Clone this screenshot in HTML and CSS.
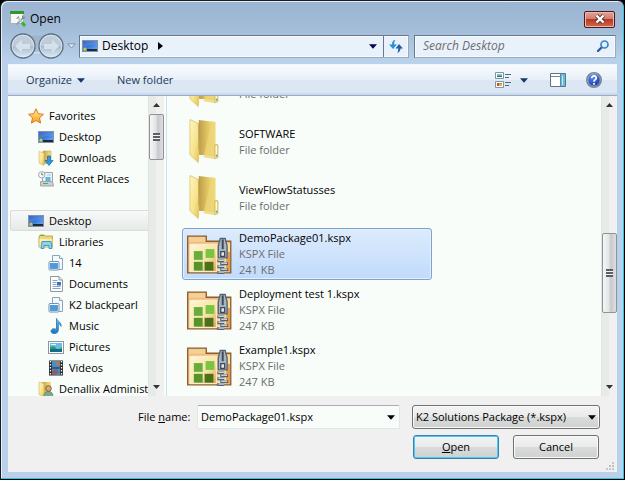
FILE: index.html
```html
<!DOCTYPE html>
<html lang="en">
<head>
<meta charset="utf-8">
<title>Open</title>
<link rel="stylesheet" href="styles.css">
</head>
<body>
<svg class="defs" aria-hidden="true">
  <defs>
    <linearGradient id="gScreen" x1="0" y1="0" x2="1" y2="1"><stop offset="0" stop-color="#1c4fb0"/><stop offset=".55" stop-color="#3f7fe0"/><stop offset="1" stop-color="#7db4f5"/></linearGradient>
    <linearGradient id="gFront" x1="0" y1="0" x2="1" y2="1"><stop offset="0" stop-color="#fdf6c4"/><stop offset=".6" stop-color="#f6e38a"/><stop offset="1" stop-color="#e2c04e"/></linearGradient>
    <linearGradient id="gBack" x1="0" y1="0" x2="1" y2="0"><stop offset="0" stop-color="#bd9c48"/><stop offset=".5" stop-color="#e0c363"/><stop offset="1" stop-color="#f5e283"/></linearGradient>
    <linearGradient id="gPack" x1="0" y1="0" x2="1" y2="1"><stop offset="0" stop-color="#fdf6d6"/><stop offset=".6" stop-color="#f8e3a4"/><stop offset="1" stop-color="#e09c50"/></linearGradient>
    <linearGradient id="gBall" x1="0" y1="0" x2="0" y2="1"><stop offset="0" stop-color="#c3cfda"/><stop offset=".48" stop-color="#bccbd9"/><stop offset=".52" stop-color="#a9bccd"/><stop offset="1" stop-color="#dcebf7"/></linearGradient>
    <linearGradient id="gStar" x1="0" y1="0" x2="0" y2="1"><stop offset="0" stop-color="#fff3a0"/><stop offset="1" stop-color="#f79a1c"/></linearGradient>
    <radialGradient id="gHelp" cx=".4" cy=".3" r=".8"><stop offset="0" stop-color="#5d8df0"/><stop offset="1" stop-color="#0b2390"/></radialGradient>
    <linearGradient id="gBlue" x1="0" y1="0" x2="0" y2="1"><stop offset="0" stop-color="#6cc4ee"/><stop offset="1" stop-color="#1676c4"/></linearGradient>
  </defs>
  <symbol id="desktop" viewBox="0 0 16 16">
    <rect x=".5" y="2.500" width="15" height="11" fill="url(#gScreen)" stroke="#7f93ad"/>
    <path d="M1 3h14v4Q7 6 1 10z" fill="#fff" opacity=".12"/>
    <path d="M5 11h10v2H5z" fill="#20293a"/><path d="M1 11h4v2H1z" fill="#3a9bdc"/>
    <circle cx="3" cy="11" r="1.500" fill="#f4c22b"/><path d="M3 11l2-1v2z" fill="#56b947"/>
  </symbol>
  <symbol id="star" viewBox="0 0 16 16"><path d="M8 .8l2.200 4.900 5.200.6-3.900 3.600 1.100 5.200L8 12.500l-4.600 2.600 1.100-5.200L.6 6.300l5.200-.6z" fill="url(#gStar)" stroke="#d97a1a"/></symbol>
  <symbol id="downloads" viewBox="0 0 16 16">
    <path d="M5 1h8v12l-8 1z" fill="url(#gBack)" stroke="#c9a84c" stroke-width=".6"/>
    <path d="M1 1.500l5 1.500v12.500L1 13z" fill="url(#gFront)" stroke="#d2b558" stroke-width=".6"/>
    <path d="M9.500 6h3v4.500H15L11 15.500 7 10.500h2.500z" fill="#2b9be0" stroke="#1768ab" stroke-width=".7"/>
  </symbol>
  <symbol id="recent" viewBox="0 0 16 16">
    <path d="M6 1.500h8.500v9H4.500V6z" fill="#eef4f8" stroke="#9aa3ab"/>
    <path d="M7.500 6h5v4h-5z" fill="#5fb5dc"/><path d="M9 3h4v2H9z" fill="#bfe0f2"/>
    <path d="M2.500 10.500h12l1 4.500h-13z" fill="#c9ced3" stroke="#a0a6ab"/><path d="M5 12.500h5" stroke="#4cb052"/>
    <circle cx="3.800" cy="3.800" r="3.200" fill="#f5f7f9" stroke="#a2a9af"/><path d="M3.800 1.800v2h1.600" fill="none" stroke="#777"/>
  </symbol>
  <symbol id="libraries" viewBox="0 0 16 16">
    <path d="M1 3l1-2h4l1 1h7.500v11H1z" fill="#eed77c" stroke="#c4a44b"/><path d="M2 1.500h4" stroke="#54b847"/>
    <path d="M1.500 5h13v8h-13z" fill="url(#gFront)"/>
    <path d="M3 14.500l1-7h9l1 7h-3v-3H6v3z" fill="#8fd2ee" stroke="#3f9dcb"/>
  </symbol>
  <symbol id="library" viewBox="0 0 16 16">
    <path d="M4.500.5h7l3 3v11h-10z" fill="#f3f8fc" stroke="#8aa6bd"/><path d="M11.500.5v3h3" fill="#fff" stroke="#8aa6bd"/>
    <rect x="1" y="6.500" width="10" height="8.500" rx="1" fill="#fff" stroke="#6f93b3"/><rect x="2.500" y="8.500" width="7" height="5" fill="#4a9be0" stroke="#2a78bf" stroke-width=".6"/>
  </symbol>
  <symbol id="document" viewBox="0 0 16 16">
    <path d="M2.500.5h8.500l3.500 3.500v11.500h-12z" fill="#fdfdfd" stroke="#9099a1"/><path d="M11 .5V4h3.500" fill="#e3e8ec" stroke="#9099a1"/>
    <path d="M4.500 4.500h5M4.500 6.500h4M4.500 8.500h4M4.500 10.500h8M4.500 12.500h8" stroke="#8da0c0"/><path d="M9 6h4v3.500H9z" fill="#2b74c9"/>
  </symbol>
  <symbol id="music" viewBox="0 0 16 16"><path d="M8.500 11.500V.5c.8 2.800 5.200 3.500 4.500 8-.6-2-1.500-2.700-2.700-3v6.500c0 4.700-7.300 4.200-7.300 1.200 0-2.300 3-3.300 5.500-1.700z" fill="url(#gBlue)" stroke="#2873ad" stroke-width=".8"/></symbol>
  <symbol id="picture" viewBox="0 0 16 16"><rect x=".5" y="2.500" width="15" height="12" fill="#fff" stroke="#8b979f"/><path d="M2 4h12v9H2z" fill="#69bde8"/><path d="M2 8q4-2 6 1t6-1v2H2z" fill="#2e9a68"/><path d="M2 10h12v3H2z" fill="#176d83"/><path d="M3 5.500h5" stroke="#e9f8ff"/></symbol>
  <symbol id="video" viewBox="0 0 16 16"><path d="M1 .5h14v15H1z" fill="#26292d"/><path d="M4 1h8v6.500H4zM4 8.500h8V15H4z" fill="#3c92cd"/><path d="M7 1l5 2v3L8 5z" fill="#c7724b"/><path d="M4 11l5-2 2 4-4 2H4z" fill="#8d5d6a"/><path d="M2.500 1v14M13.500 1v14" stroke="#eee" stroke-dasharray="1.500 1.500" stroke-width="1.400"/></symbol>
  <symbol id="user" viewBox="0 0 16 16"><path d="M4 1h9v13l-8 1z" fill="url(#gBack)"/><path d="M1 1l5 1.500v13L1 13.500z" fill="url(#gFront)" stroke="#d2b558" stroke-width=".6"/><path d="M6 15.500c0-4 2-5 4.500-5s4.500 1 4.500 5z" fill="#79a88c" stroke="#567e69" stroke-width=".6"/><circle cx="10.500" cy="7.500" r="2.800" fill="#d9a878" stroke="#6a4a36" stroke-width=".8"/></symbol>
  <symbol id="folder" viewBox="0 0 46 48">
    <path d="M12 1.500l17 2v35L12 37z" fill="url(#gBack)"/><path d="M25 3l4 .5v22l2 1v12l-3 3-11-2z" fill="#edd676" opacity=".8"/>
    <path d="M3 1l8.500 4 .8 25-.8 15L3 37z" fill="url(#gFront)" stroke="#dcc168" stroke-width=".8"/>
    <path d="M12 5v27" stroke="#a88b43" stroke-width=".8" opacity=".7"/>
    <path d="M28.500 27h3v13l-3 1z" fill="#fffbe4" stroke="#d1b14b"/><path d="M29.500 37H31v2h-1.500z" fill="#4f95c8"/>
  </symbol>
  <symbol id="package" viewBox="0 0 46 48">
    <path d="M.7 43.300V5.700h19V11h25v32.300z" fill="#f1c98a" stroke="#8b5d30" stroke-width="1.400"/>
    <path d="M2 7h16.500v4H2z" fill="#f3d096"/><path d="M2 12h42v30H2z" fill="#edb876"/>
    <path d="M3 14h27v28H3z" fill="url(#gPack)" stroke="#fdf3d7"/>
    <path d="M31 13h13v29H31z" fill="#f6df9b"/><path d="M40 22h4v20h-4z" fill="#e39d52"/>
    <path d="M7 21h9v9H7z" fill="#68ad3c"/><path d="M19 19h9v9h-9z" fill="#79c441"/><path d="M7 32h9v9H7z" fill="#56932b"/><path d="M18 32h9v9h-9z" fill="#4a7119"/>
    <path d="M34 8h5l2 8v12h-9V16z" fill="#aab5c2" stroke="#566374" stroke-width="1.400"/>
    <path d="M36.500 9v10" stroke="#3c4858" stroke-width="2"/><path d="M34.500 21.500h4v5h-4z" fill="#e1e6eb" stroke="#3c4858" stroke-width="1.300"/>
    <path d="M31 31h7M34 34h8M31 37h7M34 40h8M31 43h7" stroke="#566374" stroke-width="3"/><path d="M32 30.500h6M35 33.500h6M32 36.500h6M35 39.500h6M32 42.500h6" stroke="#c8d0d9" stroke-width="1.500"/>
  </symbol>
  <symbol id="down" viewBox="0 0 9 5"><path d="M0 0h9L4.500 5z" fill="currentColor"/></symbol>
</svg>

<main class="window">
  <header class="titlebar">
    <svg class="icon" viewBox="0 0 16 16"><path d="M.5.500h13v12H.5z" fill="#f6f8f8" stroke="#a9b4b4"/><path d="M0 0h14v3H0z" fill="#2f9a2c"/><path d="M6.500 13.500l8-8" stroke="#8b969c" stroke-width="1.600"/><path d="M7.500 6l5 6" stroke="#c3cacd" stroke-width="2"/><path d="M12.500 4.500v2.500H15M6.500 7.500l2.500-2" fill="none" stroke="#7d888e"/><path d="M12 11.500l3 3.500" stroke="#35b52d" stroke-width="3"/></svg>
    <h1 class="title">Open</h1>
    <button class="close" aria-label="Close"><svg viewBox="0 0 12 10"><path d="M2.500 1.500l7 7M9.500 1.500l-7 7" stroke="#5a3838" stroke-width="4.200"/><path d="M2.500 1.500l7 7M9.500 1.500l-7 7" stroke="#fff" stroke-width="2.400"/></svg></button>
  </header>

  <nav class="navbar" aria-label="Location">
    <div class="balls">
      <button class="ball" aria-label="Back"><svg viewBox="0 0 26 26"><circle cx="13" cy="13" r="12" fill="url(#gBall)" stroke="#5d7084" stroke-width="1.300"/><circle cx="13" cy="13" r="10.800" fill="none" stroke="#e2ecf5" opacity=".7"/><path d="M5 13l7-6v4h8v5h-8v4z" fill="#dce6ef" opacity=".85"/></svg></button>
      <button class="ball" aria-label="Forward"><svg viewBox="0 0 26 26"><circle cx="13" cy="13" r="12" fill="url(#gBall)" stroke="#5d7084" stroke-width="1.300"/><circle cx="13" cy="13" r="10.800" fill="none" stroke="#e2ecf5" opacity=".7"/><path d="M21 13l-7-6v4H6v5h8v4z" fill="#dce6ef" opacity=".85"/></svg></button>
    </div>
    <button class="history" aria-label="Recent locations"><svg viewBox="0 0 9 6"><path d="M.8.800h7.400L4.500 5z" fill="#dce8f4" stroke="#7f93a9"/></svg></button>
    <div class="address">
      <svg class="icon"><use href="#desktop"/></svg>
      <button class="crumb">Desktop</button>
      <svg class="chevron" viewBox="0 0 5 8"><path d="M0 0l5 4-5 4z"/></svg>
      <button class="drop" aria-label="Previous locations"><svg class="arrow navy"><use href="#down"/></svg></button>
      <button class="refresh" aria-label="Refresh"><svg viewBox="0 0 14 14"><path d="M6.500 1C4 1 3 3 3 5.500H0L4 10l4-4.500H5.200C5.200 3.500 5.500 2 6.500 1z" fill="#2f8fd4"/><path d="M8 14c2.500-.5 3.500-2.500 3.500-4.500H14L10 5 6.500 9.500h2.700c0 2-.2 3.500-1.200 4.500z" fill="#235fb0"/></svg></button>
    </div>
    <div class="search">
      <input class="search-input" type="search" placeholder="Search Desktop" aria-label="Search Desktop">
      <svg viewBox="0 0 12 12"><path d="M5 7L1 11" stroke="#2c5d9e" stroke-width="2.400" stroke-linecap="round"/><circle cx="7.500" cy="4.500" r="3.500" fill="#e3f1fc" stroke="#3c84cf" stroke-width="1.700"/></svg>
    </div>
  </nav>

  <div class="toolbar">
    <button class="tool">Organize <svg class="arrow"><use href="#down"/></svg></button>
    <button class="tool">New folder</button>
    <button class="tool views" aria-label="Change your view"><svg class="icon" viewBox="0 0 16 16"><path d="M.5.500h8v6h-8zM.5 9.500h8v6h-8z" fill="#fff" stroke="#8193a5"/><path d="M2 2h5v1.500H2z" fill="#7cc3e9"/><path d="M2 3.500h5V5H2z" fill="#247d6c"/><path d="M2 11h2.500v3H2z" fill="#d9472f"/><path d="M4.500 11H7v1.500H4.500z" fill="#59ae3a"/><path d="M4.500 12.500H7V14H4.500z" fill="#efb92d"/><path d="M10 2.500h6M10 5.500h4M10 10.500h6M10 13.500h4" stroke="#51697f"/></svg><svg class="arrow"><use href="#down"/></svg></button>
    <button class="tool" aria-label="Show the preview pane"><svg class="icon" viewBox="0 0 16 14"><path d="M.5.500h15v13H.5z" fill="#fff" stroke="#5d7489"/><path d="M1 3.500h10M10.500 1v12" stroke="#6f8599"/><path d="M11 1h4v12h-4z" fill="#5fc0dc"/><path d="M12 3h1v9h-1z" fill="#c2ecf5"/></svg></button>
    <button class="tool" aria-label="Help"><svg class="icon" viewBox="0 0 16 16"><circle cx="8" cy="8" r="7.300" fill="url(#gHelp)" stroke="#7d858f" stroke-width="1.400"/><circle cx="8" cy="8" r="6.200" fill="none" stroke="#c5d3ec" stroke-width=".7"/><path d="M5.700 6.300c0-3.200 4.800-3 4.600-.2C10.200 7.700 8 7.700 8 9.700M8 11v1.700" fill="none" stroke="#fff" stroke-width="1.700"/></svg></button>
  </div>

  <section class="browser">
    <nav class="side" aria-label="Folders">
      <ul class="tree">
        <li class="node"><svg class="icon"><use href="#star"/></svg>Favorites</li>
        <li class="node l1"><svg class="icon"><use href="#desktop"/></svg>Desktop</li>
        <li class="node l1"><svg class="icon"><use href="#downloads"/></svg>Downloads</li>
        <li class="node l1"><svg class="icon"><use href="#recent"/></svg>Recent Places</li>
        <li class="node current"><svg class="icon"><use href="#desktop"/></svg>Desktop</li>
        <li class="node l1"><svg class="icon"><use href="#libraries"/></svg>Libraries</li>
        <li class="node l2"><svg class="icon"><use href="#library"/></svg>14</li>
        <li class="node l2"><svg class="icon"><use href="#document"/></svg>Documents</li>
        <li class="node l2"><svg class="icon"><use href="#library"/></svg>K2 blackpearl</li>
        <li class="node l2"><svg class="icon"><use href="#music"/></svg>Music</li>
        <li class="node l2"><svg class="icon"><use href="#picture"/></svg>Pictures</li>
        <li class="node l2"><svg class="icon"><use href="#video"/></svg>Videos</li>
        <li class="node l1"><svg class="icon"><use href="#user"/></svg>Denallix Administrator</li>
      </ul>
      <div class="scroll">
        <svg class="tip up"><use href="#down"/></svg>
        <div class="thumb short"><i class="grip"></i></div>
        <div class="rest"></div>
        <svg class="tip"><use href="#down"/></svg>
      </div>
    </nav>
    <ul class="files">
      <li class="file"><svg class="big"><use href="#folder"/></svg><div><p class="name"></p><p class="meta">File folder</p></div></li>
      <li class="file"><svg class="big"><use href="#folder"/></svg><div><p class="name">SOFTWARE</p><p class="meta">File folder</p></div></li>
      <li class="file"><svg class="big"><use href="#folder"/></svg><div><p class="name">ViewFlowStatusses</p><p class="meta">File folder</p></div></li>
      <li class="file selected"><svg class="big"><use href="#package"/></svg><div><p class="name">DemoPackage01.kspx</p><p class="meta">KSPX File</p><p class="meta">241 KB</p></div></li>
      <li class="file"><svg class="big"><use href="#package"/></svg><div><p class="name">Deployment test 1.kspx</p><p class="meta">KSPX File</p><p class="meta">247 KB</p></div></li>
      <li class="file"><svg class="big"><use href="#package"/></svg><div><p class="name">Example1.kspx</p><p class="meta">KSPX File</p><p class="meta">247 KB</p></div></li>
    </ul>
    <div class="scroll">
      <svg class="tip up"><use href="#down"/></svg>
      <div class="before"></div>
      <div class="thumb"><i class="grip"></i></div>
      <div class="after"></div>
      <svg class="tip"><use href="#down"/></svg>
    </div>
  </section>

  <form class="footer">
    <div class="fields">
      <label for="filename">File <u>n</u>ame:</label>
      <div class="combo"><input id="filename" class="combo-input" type="text" value="DemoPackage01.kspx"><button type="button" class="combo-drop" aria-label="Show file names"><svg class="arrow black"><use href="#down"/></svg></button></div>
      <div class="type"><select class="type-select" aria-label="File type"><option>K2 Solutions Package (*.kspx)</option></select><svg class="arrow black type-arrow"><use href="#down"/></svg></div>
    </div>
    <div class="actions">
      <button type="button" class="btn primary"><u>O</u>pen</button>
      <button type="button" class="btn">Cancel</button>
    </div>
    <svg class="resize" viewBox="0 0 9 9"><path d="M7 0h2v2H7zM7 3.500h2v2H7zM3.500 3.500h2v2h-2zM7 7h2v2H7zM3.500 7h2v2h-2zM0 7h2v2H0z" fill="#b9bcc0"/></svg>
  </form>
</main>
</body>
</html>
```

FILE: styles.css
```css
* { box-sizing: border-box; }
body {
  margin: 0;
  background: #000;
  color: #000;
  font: 11px/16px "Open Sans", "Noto Sans", sans-serif;
}
button, input, select { font: inherit; color: inherit; }
button { border: 0; padding: 0; background: none; }
ul, p, h1 { margin: 0; padding: 0; list-style: none; }
svg { display: block; flex: none; }
.defs { position: absolute; width: 0; height: 0; }
.icon { width: 16px; height: 16px; }
.arrow { width: 8px; height: 5px; color: #16386b; }
.navy { color: #00004c; }
.black { color: #000; }

.window {
  display: flex;
  flex-direction: column;
  height: 100vh;
  padding: 0 7px 7px 7px;
  border: 1px solid #1b1f24;
  border-right-color: #000;
  border-bottom-color: #000;
  border-radius: 7px 7px 0 0;
  background: linear-gradient(#9ab4d1, #a4bdd9 30px, #b9d1ea 60px);
  box-shadow: inset -1px -1px #2cc6e0, inset 1px 1px #e4eef8;
}
.titlebar { display: flex; align-items: center; gap: 4px; height: 32px; padding: 4px 2px 0; }
.title { flex: 1; font-size: 12px; font-weight: 400; }
.close {
  display: grid;
  place-items: center;
  width: 31px;
  height: 17px;
  border: 1px solid #4c1720;
  border-radius: 2px;
  background: linear-gradient(#e3a398, #d27b6c 48%, #b9391f 50%, #cf6a4e);
  box-shadow: inset 0 0 0 1px #edb9ad;
}
.close svg { width: 12px; height: 10px; }

.navbar { display: flex; align-items: center; height: 26px; padding-right: 1px; }
.balls {
  display: flex;
  gap: 2px;
  margin-left: 2px;
  border-radius: 13px;
  background: linear-gradient(transparent 8%, #9db3c9 12%, #a9bfd5 70%, #d6e4f1 76%, transparent 80%);
}
.ball svg { width: 26px; height: 26px; }
.history { margin: 0 3px; }
.history svg { width: 9px; height: 6px; }
.address, .search {
  display: flex;
  align-items: center;
  height: 23px;
  border: 1px solid #66788b;
  border-right-color: #98acc0;
  border-bottom-color: #98acc0;
  background: #e9f1fa;
  box-shadow: inset 0 0 0 1px #f8fbfe;
}
.address { flex: 1; padding-left: 2px; margin-right: 5px; font-size: 12px; }
.crumb { margin-left: 4px; }
.chevron { width: 5px; height: 8px; margin-left: 10px; }
.drop { margin-left: auto; padding: 8px 6px; }
.refresh { height: 21px; padding: 0 5px; border-left: 1px solid #66788b; }
.refresh svg { width: 14px; height: 14px; }
.search { width: 202px; padding: 0 6px 0 8px; font-size: 12px; }
.search-input { flex: 1; min-width: 0; padding: 0; border: 0; outline: 0; background: none; }
.search-input::placeholder { color: #6d6d6d; font-style: italic; opacity: 1; }
.search svg { width: 12px; height: 12px; }

.toolbar {
  display: flex;
  align-items: center;
  gap: 22px;
  height: 32px;
  margin-top: 5px;
  padding: 0 15px 0 18px;
  border-top: 1px solid #eef6fc;
  border-bottom: 1px solid #9aaccb;
  background: linear-gradient(#f7fbfe, #e8f0f8 48%, #dbe6f2 52%, #dce8f3 88%, #c7d6e8);
  color: #1e395b;
}
.tool { display: flex; align-items: center; gap: 5px; }
.tool:nth-child(2) { margin-left: 10px; }
.views { gap: 9px; margin-left: auto; }
.toolbar .tool:last-child { margin-left: -2px; }

.browser { display: flex; flex: 1; min-height: 0; background: #f8fdfa; }
.side { display: flex; width: 159px; border-right: 1px solid #cbe2ef; }
.tree { flex: 1; min-width: 0; padding: 9px 0 0 2px; overflow: hidden; }
.node {
  display: flex;
  align-items: center;
  gap: 5px;
  height: 21px;
  padding-left: 17px;
  border: 1px solid transparent;
  border-right: 0;
  white-space: nowrap;
}
.l1 { padding-left: 27px; }
.l2 { padding-left: 37px; }
.current {
  margin-top: 21px;
  border-color: #d9dcdc;
  border-radius: 3px 0 0 3px;
  background: linear-gradient(#f8faf9, #e7e9e8);
}
.files {
  display: flex;
  flex: 1;
  flex-direction: column;
  justify-content: flex-end;
  gap: 4px;
  min-width: 0;
  padding: 0 0 4px 15px;
  overflow: hidden;
}
.file {
  display: flex;
  flex: none;
  align-items: center;
  gap: 7px;
  width: 250px;
  height: 52px;
  padding-left: 4px;
  border: 1px solid transparent;
  border-radius: 3px;
}
.selected { border-color: #7da2ce; background: linear-gradient(#dcebfc, #c1dbfc); box-shadow: inset 0 0 0 1px #e3effc; }
.big { width: 45px; height: 48px; }
.name { min-height: 16px; }
.meta { color: #6d6d6d; }

.scroll {
  display: flex;
  flex-direction: column;
  align-items: center;
  width: 16px;
  padding: 7px 0;
  border-left: 1px solid #e0e4e2;
  background: linear-gradient(90deg, #e6ebe8 45%, #f0f0f0 50%);
}
.side .scroll { margin-right: 2px; }
.tip { width: 7px; height: 4px; color: #333; }
.up { margin-bottom: 7px; transform: rotate(180deg); }
.thumb {
  display: grid;
  place-items: center;
  width: 15px;
  height: 80px;
  border: 1px solid #8f9398;
  border-radius: 2px;
  background: linear-gradient(90deg, #f6f6f6, #e3e4e6 45%, #c6c9cd 60%, #dedfe1);
}
.short { height: 46px; }
.grip { width: 7px; height: 8px; background: repeating-linear-gradient(#5c6066 0 2px, #f4f4f4 2px 3px); }
.rest { flex: 1; }
.before { flex: 5; }
.after { flex: 3; }

.footer { position: relative; height: 76px; padding: 9px 17px 0 130px; background: #f0f0f0; }
.fields { display: flex; align-items: center; height: 24px; }
.fields label { width: 53px; white-space: nowrap; }
.combo {
  display: flex;
  flex: 1;
  min-width: 0;
  height: 24px;
  margin: 0 12px 0 6px;
  border: 1px solid #e2e6ea;
  border-top-color: #abadb3;
  border-radius: 2px;
  background: #f8fdfa;
}
.combo-input { flex: 1; min-width: 0; padding: 0 3px; border: 0; outline: 0; background: none; }
.combo-drop { padding: 0 4px; }
.type { position: relative; width: 188px; }
.type-select, .btn {
  height: 24px;
  border: 1px solid #707070;
  border-radius: 3px;
  background: linear-gradient(#f3f4f3, #e9ebea 48%, #dadcdb 52%, #cfd1d0);
  box-shadow: inset 0 0 0 1px #f9fafa;
}
.type-select { width: 100%; padding: 0 20px 0 3px; appearance: none; }
.type-arrow { position: absolute; right: 4px; top: 10px; pointer-events: none; }
.actions { display: flex; justify-content: flex-end; gap: 14px; margin-top: 6px; padding-right: 1px; }
.btn { width: 86px; }
.primary { border-color: #3c7fb1; box-shadow: inset 0 0 0 1px #4bcaf2; }
.resize { position: absolute; right: 3px; bottom: 2px; width: 8px; height: 8px; }
```
